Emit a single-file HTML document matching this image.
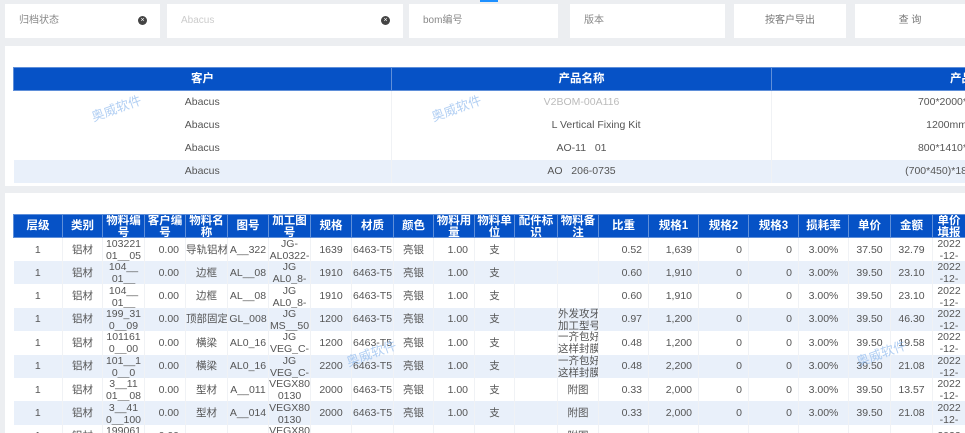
<!DOCTYPE html>
<html><head><meta charset="utf-8"><style>
*{margin:0;padding:0;box-sizing:border-box}
body{width:965px;height:433px;overflow:hidden;background:#eceef1;font-family:"Liberation Sans","Noto Sans CJK SC",sans-serif;position:relative;color:#666}
.box{position:absolute;top:4px;height:34px;background:#fff;font-size:10px;color:#888;line-height:34px;padding-left:14px}
.x{position:absolute;right:13px;top:12px;width:9px;height:9px;border-radius:50%;background:#444;color:#fff;font-size:7px;line-height:9px;text-align:center}
.btn{text-align:center;padding:0;color:#777}
.panel{position:absolute;left:5px;right:0;background:#fff;overflow:hidden}
table{border-collapse:collapse;table-layout:fixed;position:absolute;left:8px}
th{background:#0652c6;color:#fff;font-size:11.5px;font-weight:bold;border:1px solid #5f8fd9;line-height:12px;overflow:hidden;padding:0}
td{font-size:10.5px;color:#555;border-right:1px solid #f0f2f5;overflow:hidden;white-space:nowrap;line-height:12px;padding:0}
tr.alt td{background:#e9f0fa}
.t1 td{height:23px;text-align:center}
.t2 tr{height:23.4px}
.t2 td{height:23.4px;max-height:23.4px;text-align:center;vertical-align:middle}
.t2 td div{max-height:23px;overflow:hidden}
.t2 th div{height:22px;overflow:hidden;padding-top:0}
.r{text-align:right!important;padding-right:6px!important}
.wm{position:absolute;color:#7fb0ec;opacity:.6;font-size:13px;transform:rotate(-20deg)}
</style></head><body>
<div style="position:absolute;left:480px;top:0;width:18px;height:2px;background:#1e90ff"></div>
<div class="box" style="left:5px;width:155px">归档状态<span class="x">×</span></div>
<div class="box" style="left:167px;width:236px;color:#ccc">Abacus<span class="x">×</span></div>
<div class="box" style="left:409px;width:149px">bom编号</div>
<div class="box" style="left:570px;width:155px">版本</div>
<div class="box btn" style="left:734px;width:112px">按客户导出</div>
<div class="box btn" style="left:855px;width:110px">查 询</div>

<div class="panel" style="top:46px;height:140px">
<table class="t1" style="top:21px;width:960px">
<colgroup><col style="width:378px"><col style="width:380px"><col style="width:202px"></colgroup>
<tr><th style="height:23px">客户</th><th>产品名称</th><th style="text-align:right;padding-right:0">产品</th></tr>
<tr><td>Abacus</td><td style="color:#bbb">V2BOM-00A116</td><td class="r" style="padding-right:0">700*2000*</td></tr>
<tr><td>Abacus</td><td>&nbsp;&nbsp;&nbsp;&nbsp;&nbsp;&nbsp;&nbsp;&nbsp;&nbsp;&nbsp;L Vertical Fixing Kit</td><td class="r" style="padding-right:0">1200mm</td></tr>
<tr><td>Abacus</td><td>AO-11&nbsp;&nbsp;&nbsp;01</td><td class="r" style="padding-right:0">800*1410*</td></tr>
<tr class="alt"><td style="height:21px">Abacus</td><td>AO&nbsp;&nbsp;&nbsp;206-0735</td><td class="r" style="padding-right:0">(700*450)*18</td></tr>
</table>
<div class="wm" style="left:85px;top:52px">奥威软件</div>
<div class="wm" style="left:425px;top:52px">奥威软件</div>
</div>

<div class="panel" style="top:193px;height:240px">
<table class="t2" style="top:21px;width:952px">
<colgroup>
<col style="width:49px"><col style="width:40px"><col style="width:42px"><col style="width:41px"><col style="width:42px"><col style="width:41px"><col style="width:42px"><col style="width:41px"><col style="width:42px"><col style="width:40px"><col style="width:41px"><col style="width:40px"><col style="width:43px"><col style="width:41px"><col style="width:50px"><col style="width:50px"><col style="width:50px"><col style="width:50px"><col style="width:50px"><col style="width:42px"><col style="width:42px"><col style="width:33px">
</colgroup>
<tr style="height:22px"><th><div style="line-height:22px">层级</div></th><th><div style="line-height:22px">类别</div></th><th><div>物料编<br>号</div></th><th><div>客户编<br>号</div></th><th><div>物料名<br>称</div></th><th><div style="line-height:22px">图号</div></th><th><div>加工图<br>号</div></th><th><div style="line-height:22px">规格</div></th><th><div style="line-height:22px">材质</div></th><th><div style="line-height:22px">颜色</div></th><th><div>物料用<br>量</div></th><th><div>物料单<br>位</div></th><th><div>配件标<br>识</div></th><th><div>物料备<br>注</div></th><th><div style="line-height:22px">比重</div></th><th><div style="line-height:22px">规格1</div></th><th><div style="line-height:22px">规格2</div></th><th><div style="line-height:22px">规格3</div></th><th><div style="line-height:22px">损耗率</div></th><th><div style="line-height:22px">单价</div></th><th><div style="line-height:22px">金额</div></th><th><div>单价<br>填报</div></th></tr>
<tr><td>1</td><td>铝材</td><td><div>103221<br>01__05</div></td><td class="r">0.00</td><td>导轨铝材</td><td>A__322</td><td><div>JG-<br>AL0322-</div></td><td>1639</td><td>6463-T5</td><td>亮银</td><td class="r">1.00</td><td>支</td><td></td><td></td><td class="r">0.52</td><td class="r">1,639</td><td class="r">0</td><td class="r">0</td><td>3.00%</td><td>37.50</td><td>32.79</td><td><div>2022<br>-12-</div></td></tr>
<tr class="alt"><td>1</td><td>铝材</td><td><div>104__<br>01__</div></td><td class="r">0.00</td><td>边框</td><td>AL__08</td><td><div>JG<br>AL0_8-</div></td><td>1910</td><td>6463-T5</td><td>亮银</td><td class="r">1.00</td><td>支</td><td></td><td></td><td class="r">0.60</td><td class="r">1,910</td><td class="r">0</td><td class="r">0</td><td>3.00%</td><td>39.50</td><td>23.10</td><td><div>2022<br>-12-</div></td></tr>
<tr><td>1</td><td>铝材</td><td><div>104__<br>01__</div></td><td class="r">0.00</td><td>边框</td><td>AL__08</td><td><div>JG<br>AL0_8-</div></td><td>1910</td><td>6463-T5</td><td>亮银</td><td class="r">1.00</td><td>支</td><td></td><td></td><td class="r">0.60</td><td class="r">1,910</td><td class="r">0</td><td class="r">0</td><td>3.00%</td><td>39.50</td><td>23.10</td><td><div>2022<br>-12-</div></td></tr>
<tr class="alt"><td>1</td><td>铝材</td><td><div>199_31<br>0__09</div></td><td class="r">0.00</td><td>顶部固定</td><td>GL_008</td><td><div>JG<br>MS__50</div></td><td>1200</td><td>6463-T5</td><td>亮银</td><td class="r">1.00</td><td>支</td><td></td><td><div>外发攻牙<br>加工型号</div></td><td class="r">0.97</td><td class="r">1,200</td><td class="r">0</td><td class="r">0</td><td>3.00%</td><td>39.50</td><td>46.30</td><td><div>2022<br>-12-</div></td></tr>
<tr><td>1</td><td>铝材</td><td><div>101161<br>0__00</div></td><td class="r">0.00</td><td>横梁</td><td>AL0_16</td><td><div>JG<br>VEG_C-</div></td><td>1200</td><td>6463-T5</td><td>亮银</td><td class="r">1.00</td><td>支</td><td></td><td><div>一齐包好<br>这样封膜</div></td><td class="r">0.48</td><td class="r">1,200</td><td class="r">0</td><td class="r">0</td><td>3.00%</td><td>39.50</td><td>19.58</td><td><div>2022<br>-12-</div></td></tr>
<tr class="alt"><td>1</td><td>铝材</td><td><div>101__1<br>0__0</div></td><td class="r">0.00</td><td>横梁</td><td>AL0_16</td><td><div>JG<br>VEG_C-</div></td><td>2200</td><td>6463-T5</td><td>亮银</td><td class="r">1.00</td><td>支</td><td></td><td><div>一齐包好<br>这样封膜</div></td><td class="r">0.48</td><td class="r">2,200</td><td class="r">0</td><td class="r">0</td><td>3.00%</td><td>39.50</td><td>21.08</td><td><div>2022<br>-12-</div></td></tr>
<tr><td>1</td><td>铝材</td><td><div>3__11<br>01__08</div></td><td class="r">0.00</td><td>型材</td><td>A__011</td><td><div>VEGX80<br>0130</div></td><td>2000</td><td>6463-T5</td><td>亮银</td><td class="r">1.00</td><td>支</td><td></td><td>附图</td><td class="r">0.33</td><td class="r">2,000</td><td class="r">0</td><td class="r">0</td><td>3.00%</td><td>39.50</td><td>13.57</td><td><div>2022<br>-12-</div></td></tr>
<tr class="alt"><td>1</td><td>铝材</td><td><div>3__41<br>0__100</div></td><td class="r">0.00</td><td>型材</td><td>A__014</td><td><div>VEGX80<br>0130</div></td><td>2000</td><td>6463-T5</td><td>亮银</td><td class="r">1.00</td><td>支</td><td></td><td>附图</td><td class="r">0.33</td><td class="r">2,000</td><td class="r">0</td><td class="r">0</td><td>3.00%</td><td>39.50</td><td>21.08</td><td><div>2022<br>-12-</div></td></tr>
<tr><td>1</td><td>铝材</td><td><div>199061<br>01</div></td><td class="r">0.00</td><td></td><td></td><td><div>VEGX80<br>0130</div></td><td></td><td></td><td></td><td></td><td></td><td></td><td>附图</td><td></td><td></td><td></td><td></td><td></td><td></td><td></td><td>2022</td></tr>
</table>
<div class="wm" style="left:340px;top:150px">奥威软件</div>
<div class="wm" style="left:850px;top:150px">奥威软件</div>
</div>
</body></html>
